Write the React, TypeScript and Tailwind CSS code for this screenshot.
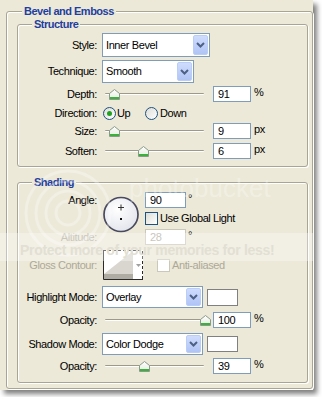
import React from "react";

const ui = "font-['Liberation_Sans',Arial,sans-serif] text-[11px] tracking-[-0.4px] text-black";

function GroupBox({ title, className, titleClass, children }: { title: string; className: string; titleClass: string; children: React.ReactNode }) {
  return (
    <div className={`rounded-[3px] border border-[#a8a595] shadow-[inset_1px_1px_0_#fff,1px_1px_0_#fff] ${className}`}>
      <div className={`-mt-[7px] w-fit bg-[#ece9d8] px-[2px] text-[11px] leading-[12px] font-bold tracking-[-0.5px] text-[#1f3f9f] ${titleClass}`}>
        {title}
      </div>
      {children}
    </div>
  );
}

function Row({ label, disabled, className, children }: { label: string; disabled?: boolean; className: string; children: React.ReactNode }) {
  return (
    <div className={`flex items-center ${className}`}>
      <div className={`w-[79px] shrink-0 text-right ${disabled ? "text-[#aca899]" : ""}`}>{label}</div>
      {children}
    </div>
  );
}

function Chevron() {
  return (
    <svg width="9" height="6" viewBox="0 0 9 6">
      <path d="M1 1 L4.5 4.5 L8 1" fill="none" stroke="#4d6185" strokeWidth="2" />
    </svg>
  );
}

function Select({ value, className }: { value: string; className: string }) {
  return (
    <div className={`ml-[5px] flex shrink-0 items-stretch border border-[#7f9db9] bg-white ${className}`}>
      <span className="flex-1 self-center pl-[3px] whitespace-nowrap">{value}</span>
      <div className="m-[1px] flex w-[15px] items-center justify-center rounded-[2px] border border-[#b9cdf7] bg-linear-to-b from-[#cfdcfd] to-[#b0c4f5]">
        <Chevron />
      </div>
    </div>
  );
}

function NumBox({ v, disabled, className = "w-[38px]" }: { v: string; disabled?: boolean; className?: string }) {
  return (
    <div
      className={`h-[16px] shrink-0 border bg-white pl-[4px] leading-[14px] ${
        disabled ? "border-[#c9c7ba] text-[#aca899]" : "border-[#7f9db9]"
      } ${className}`}
    >
      {v}
    </div>
  );
}

function Thumb({ left }: { left: number }) {
  return (
    <svg className="absolute top-[3px]" style={{ left }} width="11" height="11" viewBox="0 0 11 11">
      <defs>
        <linearGradient id="thumbFill" x1="0" y1="0" x2="0" y2="1">
          <stop offset="0" stopColor="#ffffff" />
          <stop offset="1" stopColor="#e3ecdc" />
        </linearGradient>
      </defs>
      <path d="M0.5 4.5 L5.5 0.5 L10.5 4.5 V10.5 H0.5 Z" fill="url(#thumbFill)" stroke="#8a9a8a" />
      <rect x="1" y="8" width="9" height="2" fill="#3cb03c" />
    </svg>
  );
}

// x = left edge of the thumb in page coords
function Slider({ x }: { x: number }) {
  return (
    <div className="relative ml-[5px] flex h-[16px] w-[111px] shrink-0 items-center">
      <div className="ml-[3px] h-[2px] w-[99px] rounded-[1px] border-t border-[#9d9a8b] bg-white" />
      <Thumb left={x - 102} />
    </div>
  );
}

function Radio({ checked }: { checked?: boolean }) {
  return (
    <div className="flex h-[13px] w-[13px] shrink-0 items-center justify-center rounded-full border border-[#1c5180] bg-linear-to-br from-[#dcdcd7] to-white">
      {checked && <div className="h-[5px] w-[5px] rounded-full bg-[#21a121]" />}
    </div>
  );
}

function Check({ disabled, className = "" }: { disabled?: boolean; className?: string }) {
  return (
    <div
      className={`h-[13px] w-[13px] shrink-0 border ${
        disabled ? "border-[#cac8bb] bg-white" : "border-[#1c5180] bg-linear-to-br from-[#dcdcd7] to-white"
      } ${className}`}
    />
  );
}

function AngleDial() {
  return (
    <svg className="ml-[6px] mt-[4px] shrink-0" width="37" height="37" viewBox="0 0 37 37">
      <defs>
        <radialGradient id="dialFill" cx="0.4" cy="0.35" r="0.7">
          <stop offset="0" stopColor="#ffffff" />
          <stop offset="1" stopColor="#e2e4ec" />
        </radialGradient>
      </defs>
      <circle cx="18" cy="18.5" r="17" fill="url(#dialFill)" stroke="#4a4a5e" strokeWidth="1.7" />
      <path d="M15 11.5 H21 M18 8.5 V14.5" stroke="#333" strokeWidth="1" />
      <rect x="17" y="22" width="2" height="2" fill="#111" />
    </svg>
  );
}

function ContourPreview() {
  return (
    <svg className="ml-[6px] shrink-0" width="40" height="30" viewBox="0 0 40 30">
      <rect x="0" y="0" width="40" height="30" fill="#fff" />
      <polygon points="1,24 30,1 30,29 1,29" fill="#d8d6ce" />
      <rect x="1" y="24" width="29" height="5" fill="#aeaca3" />
      <path d="M0.5 0 V29.5 H40" fill="none" stroke="#2a2a2a" />
      <path d="M0 0.5 H39.5 V30" fill="none" stroke="#2a2a2a" strokeDasharray="3 2" />
      <path d="M33 14 H38 L35.5 17 Z" fill="#a0a0a0" />
    </svg>
  );
}

function Swatch({ className }: { className: string }) {
  return <div className={`ml-[4px] w-[31px] shrink-0 border border-[#808080] bg-white ${className}`} />;
}

function Watermark() {
  return (
    <div className="pointer-events-none absolute inset-0">
      <svg className="absolute left-[20px] top-[165px]" width="96" height="96" viewBox="0 0 96 96">
        <g fill="none" stroke="#ffffff" strokeOpacity="0.3" strokeWidth="3">
          <circle cx="48" cy="48" r="12" />
          <circle cx="48" cy="48" r="22" />
          <circle cx="48" cy="48" r="32" />
          <circle cx="48" cy="48" r="42" />
        </g>
      </svg>
      <div className="absolute left-[129px] top-[175px] text-[26px] leading-[26px] tracking-normal text-white/30">photobucket</div>
      <div className="absolute left-0 top-[233px] h-[28px] w-[313px] bg-white/35">
        <div className="pl-[20px] pt-[9px] text-[14px] leading-[16px] font-bold tracking-[-0.3px] text-[#e2dfd3]">
          Protect more of your memories for less!
        </div>
      </div>
    </div>
  );
}

export default function App() {
  return (
    <div className={`h-[397px] w-[322px] overflow-hidden bg-white ${ui}`}>
      <div className="relative w-[313px] bg-[#ece9d8] pb-[1px] pt-[11px] shadow-[4px_4px_5px_rgba(0,0,0,0.5)]">
        <GroupBox title="Bevel and Emboss" className="ml-[6px] w-[307px] pb-[5px]" titleClass="ml-[15px]">
          <GroupBox title="Structure" className="ml-[10px] mt-[7px] w-[291px] pb-[7px]" titleClass="ml-[14px]">
            <Row label="Style:" className="mt-[3px] h-[24px]">
              <Select value="Inner Bevel" className="h-[24px] w-[108px]" />
            </Row>
            <Row label="Technique:" className="mt-[3px] h-[23px]">
              <Select value="Smooth" className="h-[23px] w-[92px]" />
            </Row>
            <Row label="Depth:" className="mt-[3px] h-[16px]">
              <Slider x={109} />
              <NumBox v="91" />
              <span className="ml-[3px] self-start leading-[12px]">%</span>
            </Row>
            <Row label="Direction:" className="mt-[2px] h-[18px]">
              <div className="ml-[6px] flex w-[42px] shrink-0 items-center">
                <Radio checked />
                <span className="ml-[1px]">Up</span>
              </div>
              <Radio />
              <span className="ml-[2px]">Down</span>
            </Row>
            <Row label="Size:" className="mt-[1px] h-[16px]">
              <Slider x={109} />
              <NumBox v="9" />
              <span className="ml-[3px] self-start leading-[12px]">px</span>
            </Row>
            <Row label="Soften:" className="mt-[4px] h-[16px]">
              <Slider x={138} />
              <NumBox v="6" />
              <span className="ml-[3px] self-start leading-[12px]">px</span>
            </Row>
          </GroupBox>

          <GroupBox title="Shading" className="ml-[10px] mt-[15px] w-[291px] pb-[8px]" titleClass="ml-[14px]">
            <div className="mt-[4px] flex">
              <div className="w-[79px] shrink-0 text-right">
                <div className="h-[16px] leading-[16px]">Angle:</div>
                <div className="mt-[21px] h-[16px] leading-[16px] text-[#aca899]">Altitude:</div>
              </div>
              <AngleDial />
              <div className="ml-[5px] flex flex-col">
                <div className="flex">
                  <NumBox v="90" className="w-[41px]" />
                  <span className="ml-[2px] leading-[12px]">°</span>
                </div>
                <div className="mt-[4px] flex h-[13px] items-center">
                  <Check />
                  <span className="ml-[2px]">Use Global Light</span>
                </div>
                <div className="mt-[4px] flex">
                  <NumBox v="28" disabled className="w-[41px]" />
                  <span className="ml-[2px] leading-[12px]">°</span>
                </div>
              </div>
            </div>
            <Row label="Gloss Contour:" disabled className="mt-[5px] h-[30px]">
              <ContourPreview />
              <Check disabled className="ml-[14px]" />
              <span className="ml-[2px] text-[#aca899]">Anti-aliased</span>
            </Row>
            <Row label="Highlight Mode:" className="mt-[6px] h-[22px]">
              <Select value="Overlay" className="h-[22px] w-[101px]" />
              <Swatch className="h-[17px]" />
            </Row>
            <Row label="Opacity:" className="mt-[4px] h-[16px]">
              <Slider x={200} />
              <NumBox v="100" />
              <span className="ml-[3px] self-start leading-[12px]">%</span>
            </Row>
            <Row label="Shadow Mode:" className="mt-[5px] h-[22px]">
              <Select value="Color Dodge" className="h-[22px] w-[101px]" />
              <Swatch className="h-[16px]" />
            </Row>
            <Row label="Opacity:" className="mt-[3px] h-[16px]">
              <Slider x={139} />
              <NumBox v="39" />
              <span className="ml-[3px] self-start leading-[12px]">%</span>
            </Row>
          </GroupBox>
        </GroupBox>
        <Watermark />
      </div>
    </div>
  );
}
